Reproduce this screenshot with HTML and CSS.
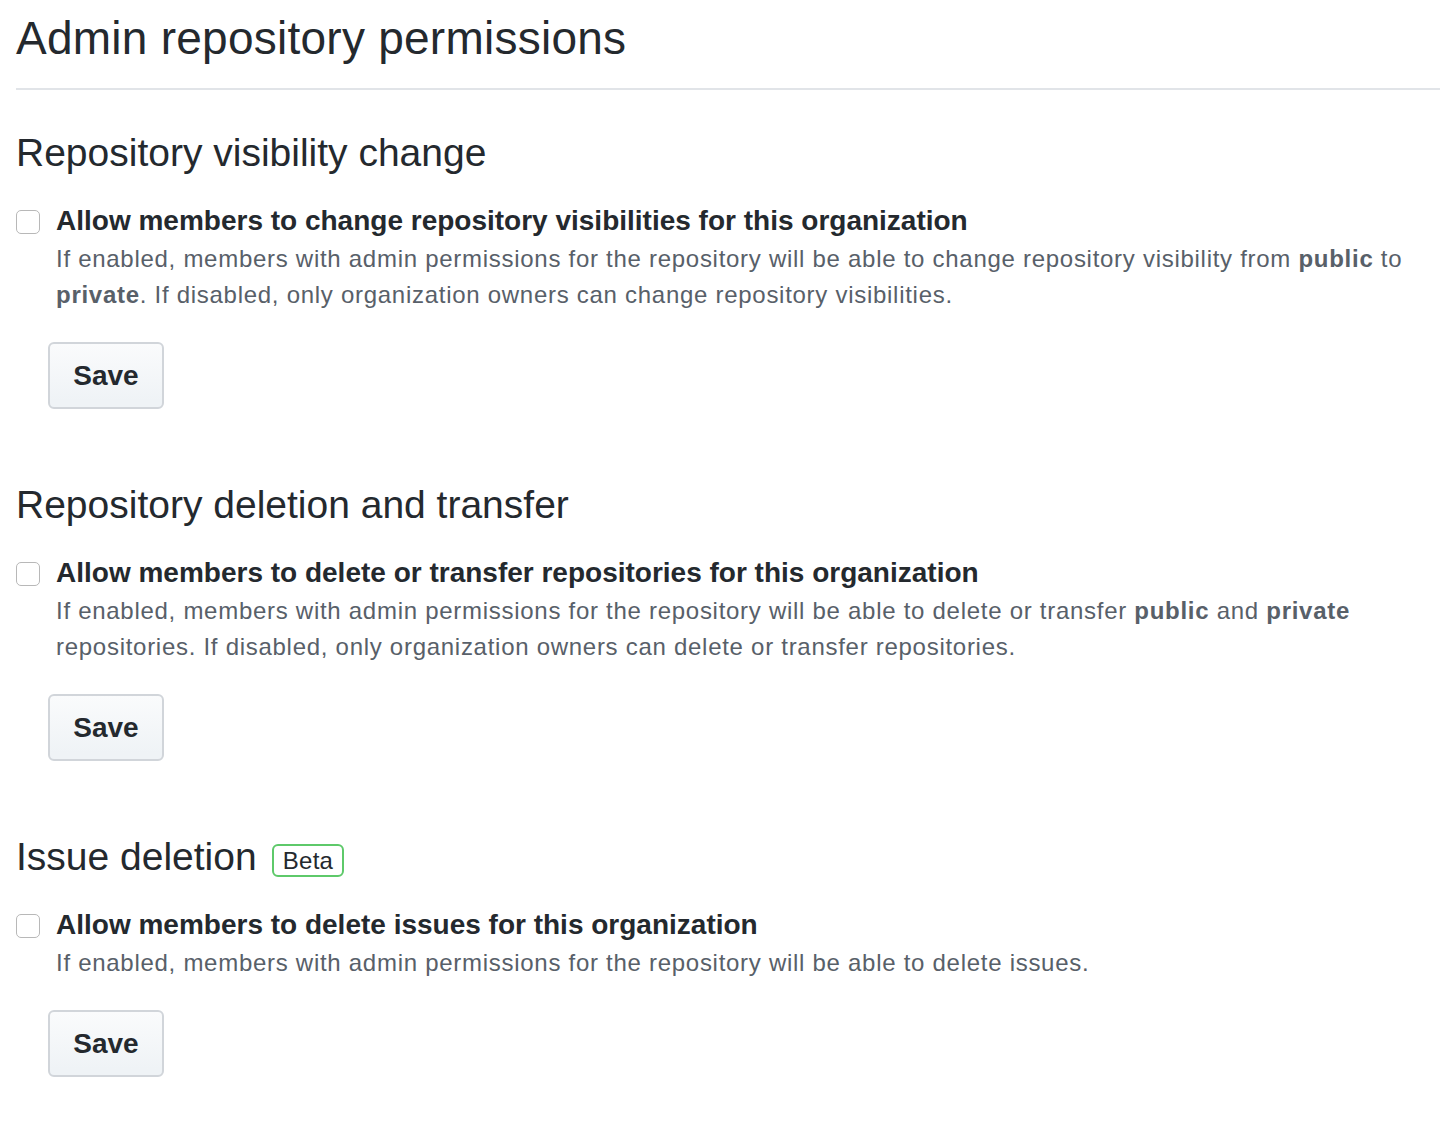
FILE: index.html
```html
<!DOCTYPE html>
<html lang="en">
<head>
<meta charset="utf-8">
<title>Admin repository permissions</title>
<link rel="stylesheet" href="styles.css">
</head>
<body>
<main class="page">
  <div class="subhead">
    <h1 class="subhead-title">Admin repository permissions</h1>
  </div>

  <section class="section">
    <h2 class="section-title">Repository visibility change</h2>
    <div class="check">
      <span class="box"></span>
      <div class="check-body">
        <div class="check-label">Allow members to change repository visibilities for this organization</div>
        <p class="note">If enabled, members with admin permissions for the repository will be able to change repository visibility from <strong>public</strong> to <strong>private</strong>. If disabled, only organization owners can change repository visibilities.</p>
      </div>
    </div>
    <button class="btn" type="button">Save</button>
  </section>

  <section class="section">
    <h2 class="section-title">Repository deletion and transfer</h2>
    <div class="check">
      <span class="box"></span>
      <div class="check-body">
        <div class="check-label">Allow members to delete or transfer repositories for this organization</div>
        <p class="note">If enabled, members with admin permissions for the repository will be able to delete or transfer <strong>public</strong> and <strong>private</strong> repositories. If disabled, only organization owners can delete or transfer repositories.</p>
      </div>
    </div>
    <button class="btn" type="button">Save</button>
  </section>

  <section class="section">
    <h2 class="section-title">Issue deletion <span class="badge">Beta</span></h2>
    <div class="check">
      <span class="box"></span>
      <div class="check-body">
        <div class="check-label">Allow members to delete issues for this organization</div>
        <p class="note">If enabled, members with admin permissions for the repository will be able to delete issues.</p>
      </div>
    </div>
    <button class="btn" type="button">Save</button>
  </section>
</main>
</body>
</html>
```

FILE: styles.css
```css
html, body {
  margin: 0;
  padding: 0;
  background: #ffffff;
}

body {
  font-family: "Liberation Sans", Arial, Helvetica, sans-serif;
  color: #24292e;
}

.page {
  padding-left: 16px;
}

.subhead {
  padding-top: 8px;
  padding-bottom: 20px;
  border-bottom: 2px solid #e1e4e8;
}

.subhead-title {
  margin: 0;
  font-size: 46px;
  font-weight: 400;
  line-height: 60px;
  letter-spacing: 0.25px;
}

.section {
  padding-top: 38px;
  padding-bottom: 33px;
}

.section-title {
  margin: 0;
  font-size: 39px;
  font-weight: 400;
  line-height: 50px;
  display: flex;
  align-items: center;
  gap: 15px;
}

.badge {
  display: inline-block;
  font-size: 24px;
  line-height: 29px;
  padding: 0 9px;
  border: 2px solid #5ec96a;
  border-radius: 6px;
  color: #24292e;
  margin-top: 6px;
  letter-spacing: 0.3px;
}

.check {
  display: flex;
  align-items: flex-start;
  gap: 16px;
  margin-top: 23px;
}

.box {
  flex: none;
  width: 22px;
  height: 22px;
  border: 1px solid #b8b8b8;
  border-radius: 5px;
  background: #ffffff;
  margin-top: 9px;
}

.check-body {
  flex: 1;
  padding-right: 10px;
}

.check-label {
  font-size: 28px;
  font-weight: 700;
  line-height: 40px;
}

.note {
  margin: 0;
  font-size: 24px;
  line-height: 36px;
  letter-spacing: 0.72px;
  color: #586069;
}

.note strong {
  font-weight: 700;
}

.btn {
  display: block;
  margin-top: 29px;
  margin-left: 32px;
  width: 116px;
  height: 67px;
  padding: 0;
  font-family: inherit;
  font-size: 28px;
  font-weight: 700;
  color: #24292e;
  background: linear-gradient(180deg, #fafbfc 0%, #eff3f6 90%);
  border: 2px solid #d1d5da;
  border-radius: 6px;
}
```
